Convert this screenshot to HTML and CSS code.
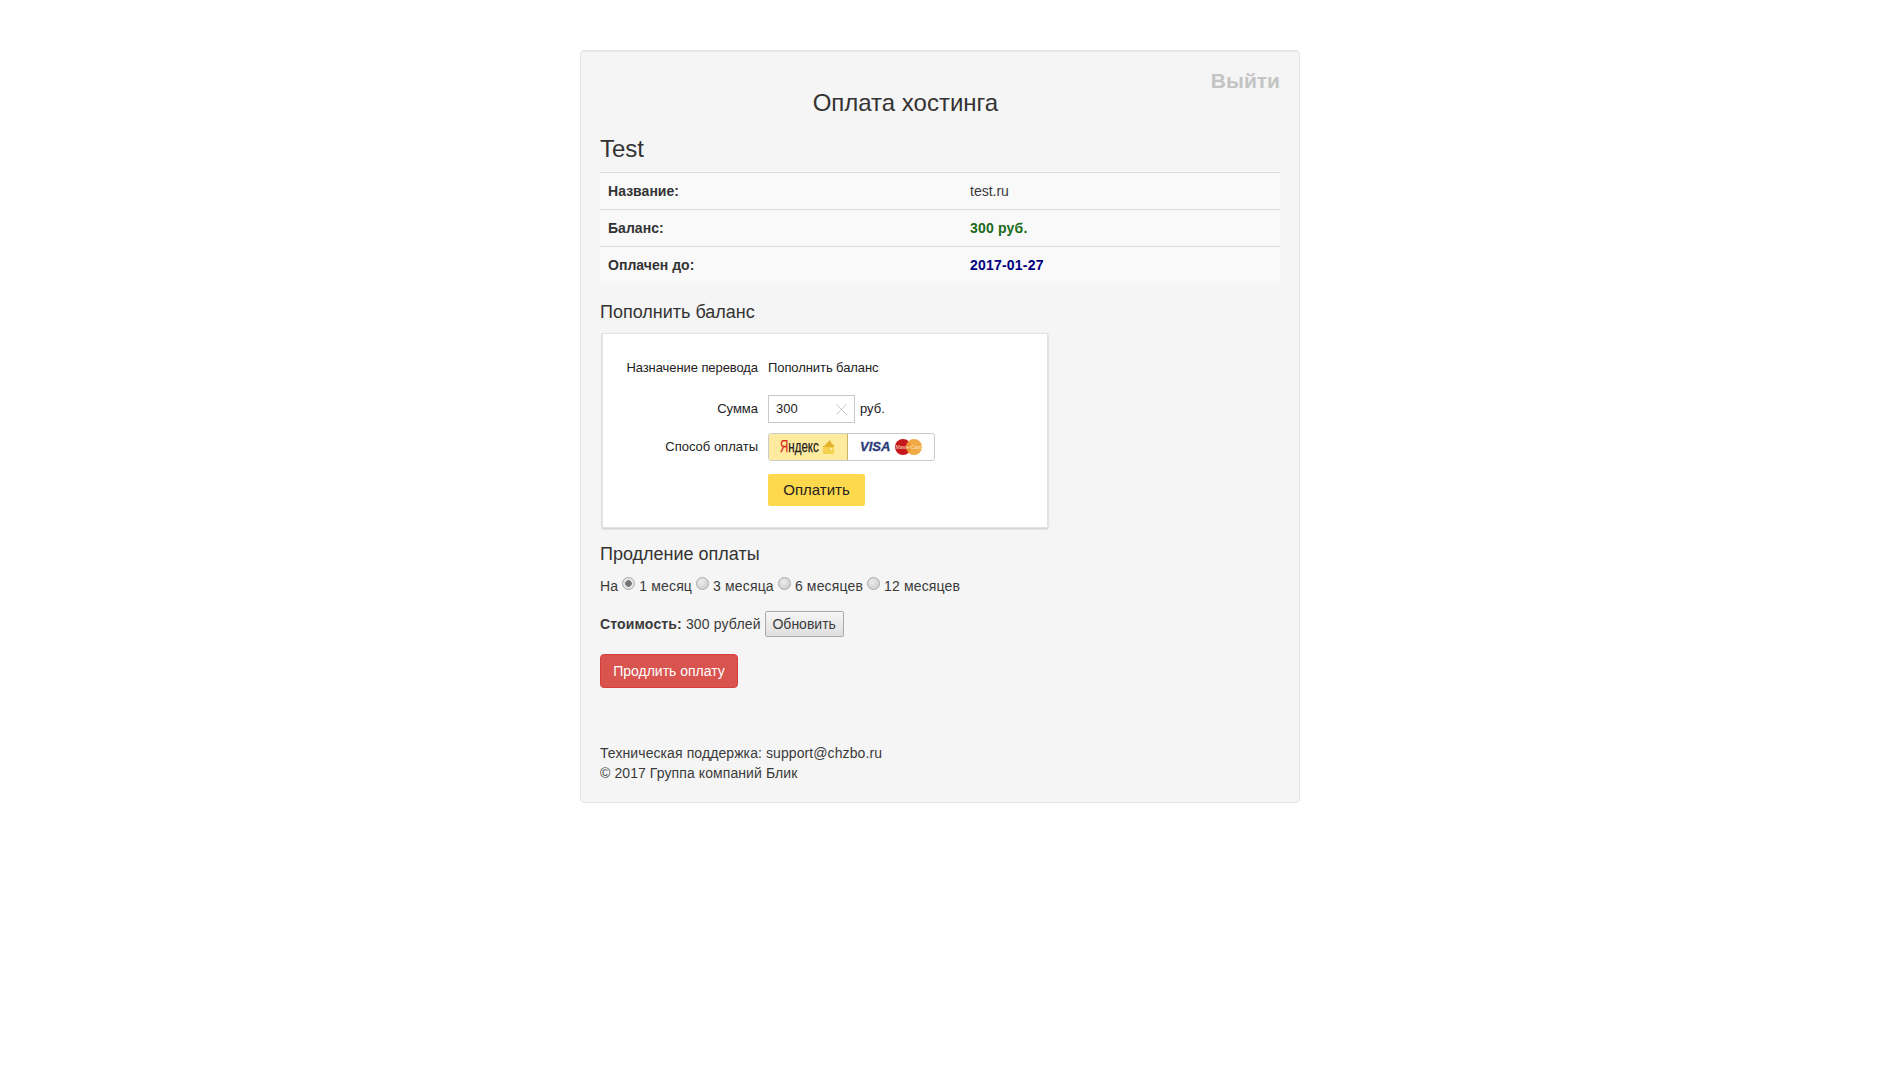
FILE: index.html
```html
<!DOCTYPE html>
<html lang="ru">
<head>
<meta charset="utf-8">
<title>Оплата хостинга</title>
<link rel="stylesheet" href="styles.css">
</head>
<body>
<main class="well">
  <a class="logout" href="#">Выйти</a>
  <h3 class="title">Оплата хостинга</h3>
  <h3 class="site">Test</h3>
  <table class="info">
    <tr><th>Название:</th><td>test.ru</td></tr>
    <tr><th>Баланс:</th><td class="green">300 руб.</td></tr>
    <tr><th>Оплачен до:</th><td class="navy">2017-01-27</td></tr>
  </table>
  <h4 class="sub">Пополнить баланс</h4>
  <section class="ym">
    <div class="ym-row ym-first">
      <span class="ym-label">Назначение перевода</span>
      <span class="ym-value">Пополнить баланс</span>
    </div>
    <div class="ym-row ym-sum">
      <span class="ym-label">Сумма</span>
      <span class="ym-input"><span>300</span>
        <svg class="ym-x" width="11" height="11" viewBox="0 0 11 11"><path d="M.5.5l10 10M10.500.5l-10 10" stroke="#b8b8b8" stroke-width=".8" fill="none"/></svg>
      </span>
      <span class="ym-cur">руб.</span>
    </div>
    <div class="ym-row ym-method">
      <span class="ym-label">Способ оплаты</span>
      <span class="ym-switch">
        <span class="ym-opt ym-opt-on">
          <span class="ya"><span class="ya-red">Я</span>ндекс</span>
          <svg class="wallet" width="13" height="14" viewBox="0 0 13 14"><path d="M2 6l6-6 2 4 2 1v9H1V6z" fill="#e2b42a"/><path d="M1 7h11v7H1z" fill="#f5d24e"/><circle cx="9.500" cy="9" r="1" fill="#fff6cc"/></svg>
        </span>
        <span class="ym-opt ym-opt-card">
          <span class="visa">VISA</span>
          <span class="mc"><span class="mc-r"></span><span class="mc-o"></span><span class="mc-t">MasterCard</span></span>
        </span>
      </span>
    </div>
    <div class="ym-row ym-submit">
      <span class="ym-label"></span>
      <button class="ym-pay" type="button">Оплатить</button>
    </div>
  </section>
  <h4 class="sub sub-ext">Продление оплаты</h4>
  <div class="period">На
    <label><input type="radio" name="p" checked> 1 месяц</label>
    <label><input type="radio" name="p"> 3 месяца</label>
    <label><input type="radio" name="p"> 6 месяцев</label>
    <label><input type="radio" name="p"> 12 месяцев</label>
  </div>
  <div class="cost"><b>Стоимость:</b> 300 рублей <button class="refresh" type="button">Обновить</button></div>
  <button class="extend" type="button">Продлить оплату</button>
  <footer class="foot">Техническая поддержка: support@chzbo.ru<br>© 2017 Группа компаний Блик</footer>
</main>
</body>
</html>
```

FILE: styles.css
```css
* { box-sizing: border-box; }
body {
  margin: 0;
  background: #fff;
  font: 14px/20px "Liberation Sans", Arial, sans-serif;
  color: #3a3a3a;
}
.well {
  width: 720px;
  height: 753px;
  margin: 50px auto 0;
  padding: 19px;
  background: #f5f5f5;
  border: 1px solid #e3e3e3;
  border-radius: 4px;
  box-shadow: inset 0 1px 1px rgba(0,0,0,.05);
}
.logout {
  float: right;
  font-size: 21px;
  line-height: 23px;
  font-weight: bold;
  color: #c4c4c4;
  text-decoration: none;
  margin-top: -1px;
}
h3, h4 { margin: 0; font-weight: 500; color: #333; }
.title {
  font-size: 24px;
  line-height: 26px;
  text-align: center;
  padding-top: 20px;
}
.site {
  font-size: 24px;
  line-height: 26px;
  margin-top: 20px;
}
.info {
  width: 100%;
  margin-top: 10px;
  border-collapse: collapse;
  table-layout: fixed;
}
.info th, .info td {
  height: 37px;
  padding: 8px;
  text-align: left;
  vertical-align: middle;
  border-top: 1px solid #ddd;
  background: #f9f9f9;
  font-size: 14px;
}
.info tr:last-child th, .info tr:last-child td { height: 36px; }
.info th { width: 362px; font-weight: bold; color: #333; letter-spacing: .03px; }
.info td.green { color: #1a6b1a; font-weight: bold; letter-spacing: .2px; }
.info td.navy { color: #000080; font-weight: bold; letter-spacing: .2px; }
.sub {
  font-size: 18px;
  line-height: 20px;
  margin-top: 19px;
}
.ym {
  width: 446px;
  height: 195px;
  margin: 11px 0 0 2px;
  padding-top: 23px;
  background: #fff;
  border: 1px solid #e2e2e2;
  box-shadow: 0 1px 2px rgba(0,0,0,.2);
  font-size: 13px;
  color: #222;
}
.ym-row { display: flex; align-items: center; }
.ym-first { height: 22px; letter-spacing: -.08px; }
.ym-sum { height: 28px; margin-top: 16px; }
.ym-method { height: 28px; margin-top: 10px; }
.ym-submit { margin-top: 13px; }
.ym-label {
  width: 165px;
  padding-right: 10px;
  text-align: right;
  flex: none;
}
.ym-value { color: #222; }
.ym-input {
  width: 87px;
  height: 28px;
  padding: 0 7px;
  display: flex;
  align-items: center;
  justify-content: space-between;
  border: 1px solid #c8c8c8;
  font-size: 13px;
}
.ym-x { display: block; margin-right: 0; }
.ym-cur { margin-left: 5px; }
.ym-switch {
  display: flex;
  width: 167px;
  height: 28px;
  border: 1px solid #ccc;
  border-radius: 3px;
  overflow: hidden;
}
.ym-opt {
  display: flex;
  align-items: center;
}
.ym-opt-on {
  width: 79px;
  padding-left: 11px;
  background: #ffeba0;
  border-right: 1px solid #c6b26a;
}
.ym-opt-card { flex: 1; gap: 5px; padding-left: 12px; }
.ya {
  display: block;
  width: 37px;
  margin-right: 5px;
  font-size: 16px;
  line-height: 20px;
  color: #222;
  white-space: nowrap;
  transform: scaleX(.72);
  transform-origin: left center;
  -webkit-text-stroke: .25px #222;
}
.ya-red { color: #d92b1f; -webkit-text-stroke-color: #d92b1f; }
.wallet { flex: none; }
.visa {
  font-size: 13px;
  font-weight: bold;
  font-style: italic;
  color: #2a3a7a;
  -webkit-text-stroke: .3px #2a3a7a;
}
.mc {
  position: relative;
  display: block;
  width: 27px;
  height: 16px;
}
.mc-r, .mc-o {
  position: absolute;
  top: 0;
  width: 16px;
  height: 16px;
  border-radius: 50%;
}
.mc-r { left: 0; background: #c8161d; }
.mc-o { right: 0; background: #f0a030; opacity: .9; }
.mc-t {
  position: absolute;
  left: 0;
  right: 0;
  top: 5px;
  font-size: 5px;
  line-height: 6px;
  text-align: center;
  color: #fbe3c0;
  white-space: nowrap;
}
.ym-pay {
  width: 97px;
  height: 32px;
  padding: 0 0 2px;
  border: 0;
  border-radius: 2px;
  background: #ffd94d;
  color: #222;
  font: 15px "Liberation Sans", sans-serif;
}
.sub-ext { margin-top: 16px; }
.period { margin-top: 12px; letter-spacing: .15px; }
.period input {
  appearance: none;
  margin: 0;
  width: 13px;
  height: 13px;
  vertical-align: 1px;
  border: 1px solid #a8a8a8;
  border-radius: 50%;
  background: radial-gradient(circle at 40% 35%, #ececec, #c8c8c8);
}
.period input:checked {
  background: radial-gradient(circle, #6e6e6e 0, #7a7a7a 3px, #e4e4e4 3.600px);
}
.period label { font-weight: normal; }
.cost { margin-top: 15px; line-height: 26px; height: 26px; letter-spacing: .15px; }
.refresh {
  height: 26px;
  width: 79px;
  padding: 0;
  border: 1px solid #a9a9a9;
  border-radius: 2px;
  background: linear-gradient(#f6f6f6, #dedede);
  color: #3a3a3a;
  font: 14px "Liberation Sans", sans-serif;
}
.extend {
  display: block;
  width: 138px;
  height: 34px;
  margin-top: 17px;
  padding: 0;
  border: 1px solid #d43f3a;
  border-radius: 4px;
  background: #d9534f;
  color: #fff;
  font: 14px "Liberation Sans", sans-serif;
}
.foot { margin-top: 55px; letter-spacing: .09px; }
```
